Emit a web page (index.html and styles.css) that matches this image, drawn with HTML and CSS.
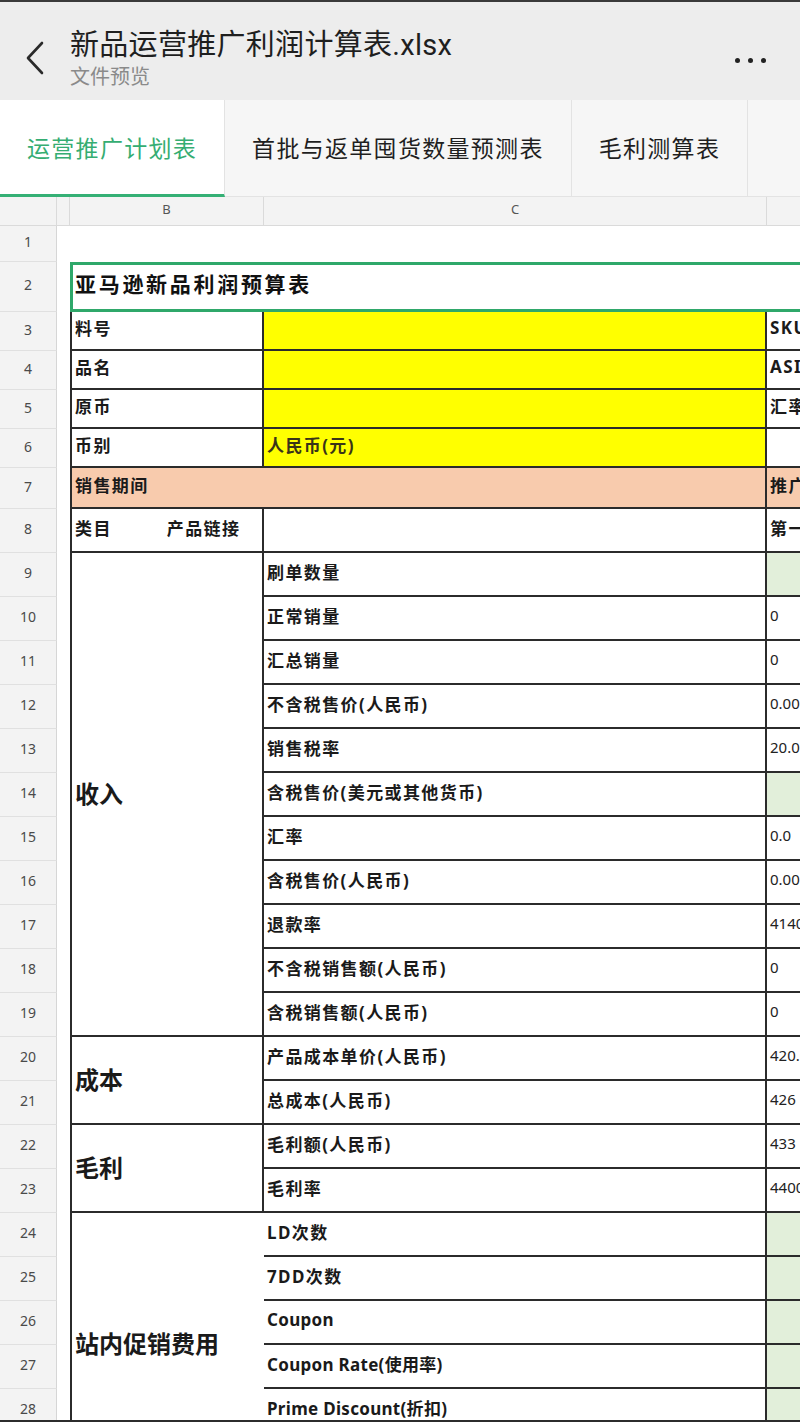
FILE: index.html
```html
<!DOCTYPE html>
<html lang="zh-CN">
<head>
<meta charset="utf-8">
<title>新品运营推广利润计算表.xlsx</title>
<link rel="stylesheet" href="styles.css">
</head>
<body>
<div class="screen">
  <header class="topbar">
    <svg class="back" viewBox="0 0 20 34" aria-hidden="true"><path d="M17 2 L3 17 L17 32" fill="none" stroke="#2a2a2a" stroke-width="2.6" stroke-linecap="round" stroke-linejoin="round"/></svg>
    <div class="titles">
      <div class="title">新品运营推广利润计算表.xlsx</div>
      <div class="subtitle">文件预览</div>
    </div>
    <div class="more"><span></span><span></span><span></span></div>
  </header>

  <nav class="tabs">
    <div class="tab active">运营推广计划表</div>
    <div class="tab">首批与返单囤货数量预测表</div>
    <div class="tab">毛利测算表</div>
    <div class="tab empty"></div>
  </nav>

  <div class="sheet">
    <div class="grid">
      <!-- column headers -->
      <div class="ch corner"></div><div class="ch"></div><div class="ch">B</div><div class="ch">C</div><div class="ch"></div>

      <!-- row 1 -->
      <div class="rh">1</div><div class="a"></div><div class="blank span3"></div>
      <!-- row 2 -->
      <div class="rh">2</div><div class="a"></div><div class="title-cell span3">亚马逊新品利润预算表</div>
      <!-- row 3 -->
      <div class="rh">3</div><div class="a"></div><div class="c bl">料号</div><div class="c yel"></div><div class="c d">SKU</div>
      <!-- row 4 -->
      <div class="rh">4</div><div class="a"></div><div class="c bl">品名</div><div class="c yel"></div><div class="c d">ASIN</div>
      <!-- row 5 -->
      <div class="rh">5</div><div class="a"></div><div class="c bl">原币</div><div class="c yel"></div><div class="c d">汇率</div>
      <!-- row 6 -->
      <div class="rh">6</div><div class="a"></div><div class="c bl">币别</div><div class="c yel olive">人民币(元)</div><div class="c d"></div>
      <!-- row 7 -->
      <div class="rh">7</div><div class="a"></div><div class="c bl peach span2">销售期间</div><div class="c d peach">推广期</div>
      <!-- row 8 -->
      <div class="rh">8</div><div class="a"></div><div class="c bl">类目<span class="gap">产品链接</span></div><div class="c"></div><div class="c d">第一周</div>

      <!-- rows 9-19 -->
      <div class="rh">9</div><div class="a"></div><div class="c bl big r11">收入</div><div class="c">刷单数量</div><div class="c d grn"></div>
      <div class="rh">10</div><div class="a"></div><div class="c">正常销量</div><div class="c d num">0</div>
      <div class="rh">11</div><div class="a"></div><div class="c">汇总销量</div><div class="c d num">0</div>
      <div class="rh">12</div><div class="a"></div><div class="c">不含税售价(人民币)</div><div class="c d num">0.00</div>
      <div class="rh">13</div><div class="a"></div><div class="c">销售税率</div><div class="c d num">20.00%</div>
      <div class="rh">14</div><div class="a"></div><div class="c">含税售价(美元或其他货币)</div><div class="c d grn"></div>
      <div class="rh">15</div><div class="a"></div><div class="c">汇率</div><div class="c d num">0.0</div>
      <div class="rh">16</div><div class="a"></div><div class="c">含税售价(人民币)</div><div class="c d num">0.00</div>
      <div class="rh">17</div><div class="a"></div><div class="c">退款率</div><div class="c d num">4140</div>
      <div class="rh">18</div><div class="a"></div><div class="c">不含税销售额(人民币)</div><div class="c d num">0</div>
      <div class="rh">19</div><div class="a"></div><div class="c">含税销售额(人民币)</div><div class="c d num">0</div>

      <!-- rows 20-21 -->
      <div class="rh">20</div><div class="a"></div><div class="c bl big r2">成本</div><div class="c">产品成本单价(人民币)</div><div class="c d num">420.00</div>
      <div class="rh">21</div><div class="a"></div><div class="c">总成本(人民币)</div><div class="c d num">426</div>

      <!-- rows 22-23 -->
      <div class="rh">22</div><div class="a"></div><div class="c bl big r2">毛利</div><div class="c">毛利额(人民币)</div><div class="c d num">433</div>
      <div class="rh">23</div><div class="a"></div><div class="c">毛利率</div><div class="c d num">4400</div>

      <!-- rows 24-29 -->
      <div class="rh">24</div><div class="a"></div><div class="c bl big r6 open">站内促销费用</div><div class="c">LD次数</div><div class="c d grn"></div>
      <div class="rh">25</div><div class="a"></div><div class="c">7DD次数</div><div class="c d grn"></div>
      <div class="rh">26</div><div class="a"></div><div class="c lat">Coupon</div><div class="c d grn"></div>
      <div class="rh">27</div><div class="a"></div><div class="c lat">Coupon Rate(使用率)</div><div class="c d grn"></div>
      <div class="rh">28</div><div class="a"></div><div class="c lat">Prime Discount(折扣)</div><div class="c d grn"></div>
      <div class="rh">29</div><div class="a"></div><div class="c"></div><div class="c d grn"></div>
    </div>
  </div>
</div>
</body>
</html>
```

FILE: styles.css
```css
* { box-sizing: border-box; }

html, body {
  margin: 0;
  padding: 0;
  background: #ffffff;
}

body {
  font-family: "Noto Sans", "Noto Sans CJK SC", sans-serif;
  color: #1a1a1a;
}

.screen {
  width: 800px;
  height: 1422px;
  overflow: hidden;
  display: flex;
  flex-direction: column;
}

/* ---------- top bar ---------- */
.topbar {
  flex: 0 0 100px;
  background: #ededed;
  border-top: 2px solid #3a3a3a;
  display: flex;
  align-items: flex-start;
  padding-left: 25px;
}

.back {
  width: 20px;
  height: 34px;
  margin-top: 39px;
  flex: 0 0 auto;
}

.titles {
  margin-left: 25px;
  padding-top: 26px;
}

.title {
  font-family: Roboto, "Noto Sans CJK SC", sans-serif;
  font-size: 29px;
  letter-spacing: 0.3px;
  line-height: 34px;
  color: #1f1f1f;
  white-space: nowrap;
}

.subtitle {
  font-family: "Noto Sans CJK SC", sans-serif;
  font-size: 20px;
  line-height: 28px;
  color: #8a8a8a;
}

.more {
  margin-left: auto;
  margin-right: 34px;
  margin-top: 56px;
  display: flex;
  gap: 8px;
}

.more span {
  width: 5px;
  height: 5px;
  border-radius: 50%;
  background: #222;
}

/* ---------- tabs ---------- */
.tabs {
  flex: 0 0 97px;
  display: flex;
  background: #f6f6f6;
}

.tab {
  padding: 0 27px 2px;
  display: flex;
  align-items: center;
  justify-content: center;
  font-family: "Noto Sans CJK SC", sans-serif;
  font-size: 23px;
  letter-spacing: 1.3px;
  color: #1f1f1f;
  border-right: 1px solid #e3e3e3;
  border-bottom: 1px solid #e3e3e3;
  white-space: nowrap;
}

.tab.active {
  background: #ffffff;
  color: #35ad72;
  border-bottom: 3px solid #35b075;
  padding-bottom: 0;
}

.tab.empty {
  flex: 1;
  border-right: 0;
}

/* ---------- sheet ---------- */
.sheet {
  flex: 1;
  overflow: hidden;
  border-bottom: 2px solid #2c2c2c;
}

.grid {
  display: grid;
  width: 1000px;
  grid-template-columns: 57px 13px 194px 503px 233px;
  grid-template-rows: 29px 36px 50px 39px 39px 39px 39px 41px 44px repeat(21, 44px);
}

.ch {
  background: #f3f3f3;
  border-right: 1px solid #dadada;
  border-bottom: 1px solid #dadada;
  display: flex;
  align-items: center;
  justify-content: center;
  padding-bottom: 4px;
  font-family: "Noto Sans", sans-serif;
  font-size: 13px;
  color: #555;
}

.rh {
  background: #f3f3f3;
  border-right: 1px solid #d6d6d6;
  border-bottom: 1px solid #e0e0e0;
  display: flex;
  align-items: center;
  justify-content: center;
  padding-bottom: 4px;
  font-family: "Noto Sans", sans-serif;
  font-size: 14px;
  color: #4a4a4a;
}

.a { background: #ffffff; }
.blank { background: #ffffff; }

.span2 { grid-column: span 2; }
.span3 { grid-column: span 3; }
.r2 { grid-row: span 2; }
.r6 { grid-row: span 6; }
.r11 { grid-row: span 11; }

.title-cell {
  border: 3px solid #2fa86a;
  display: flex;
  align-items: center;
  padding: 0 0 8px 2px;
  font-family: "Noto Sans CJK SC", sans-serif;
  font-weight: 700;
  font-size: 21px;
  letter-spacing: 2.7px;
  color: #111;
  white-space: nowrap;
}

.c {
  display: flex;
  align-items: center;
  padding: 0 3px 6px 3px;
  border-right: 2px solid #2b2b2b;
  border-bottom: 2px solid #2b2b2b;
  font-weight: 700;
  font-size: 17px;
  letter-spacing: 1.4px;
  color: #1a1a1a;
  white-space: nowrap;
  overflow: hidden;
}

.c.lat { letter-spacing: 0.3px; }

.bl { border-left: 2px solid #2b2b2b; }
.d { border-right: 0; }
.open { border-right: 0; }

.big {
  font-size: 24px;
  letter-spacing: 0;
  padding-bottom: 4px;
}

.num {
  font-weight: 400;
  font-size: 15px;
  letter-spacing: 0;
  color: #222;
}

.gap { margin-left: 55px; }

.yel { background: #ffff00; }
.olive { color: #3a3418; }
.peach { background: #f8cbad; }
.grn { background: #e2efda; }
```
